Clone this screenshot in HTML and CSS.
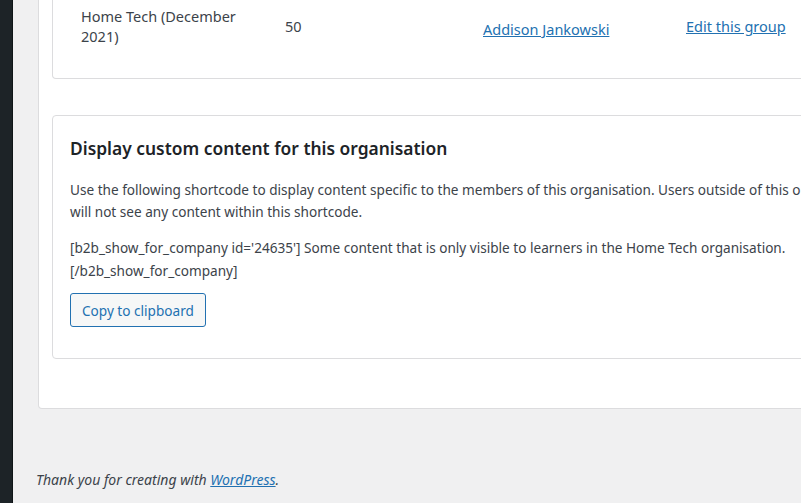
FILE: index.html
```html
<!DOCTYPE html>
<html lang="en">
  <head>
    <meta charset="UTF-8" />
    <meta name="viewport" content="width=device-width, initial-scale=1.0" />
    <title>Organisation</title>
    <link rel="stylesheet" href="styles.css">
  </head>

  <body>
    <aside class="sidebar"></aside>
    <div class="content">
      <main class="panel">
        <section class="card groups">
          <div class="group-row">
            <span class="group-name">Home Tech (December 2021)</span>
            <span class="group-count">50</span>
            <a class="group-leader" href="#">Addison Jankowski</a>
            <a class="group-edit" href="#">Edit this group</a>
          </div>
        </section>

        <section class="card shortcode">
          <h2>Display custom content for this organisation</h2>
          <p>Use the following shortcode to display content specific to the members of this organisation. Users outside of this organisation will not see any content within this shortcode.</p>
          <p class="code">[b2b_show_for_company id='24635'] Some content that is only visible to learners in the Home Tech organisation. [/b2b_show_for_company]</p>
          <button class="button">Copy to clipboard</button>
        </section>
      </main>

      <footer class="footer">
        <p><em>Thank you for creating with <a href="#">WordPress</a>.</em></p>
      </footer>
    </div>
  </body>
</html>
```

FILE: styles.css
```css
html {
  box-sizing: border-box;
  font-family: "Noto Sans", "Open Sans", sans-serif;
  font-size: 13.6px;
}

*,
*:before,
*:after {
  box-sizing: inherit;
}

body {
  margin: 0;
  height: 503px;
  overflow: hidden;
  display: flex;
  background-color: #f0f0f1;
  color: #3c434a;
}

a {
  color: #2271b1;
}

.sidebar {
  flex: 0 0 13px;
  background-color: #1d2327;
  border-right: 1px solid #101517;
}

.content {
  flex: 0 0 909px;
  display: flex;
  flex-direction: column;
}

.panel {
  margin-left: 25px;
  padding: 0 13px 49px;
  background-color: #fff;
  border: 1px solid #dcdcde;
  border-top: 0;
  border-radius: 0 0 4px 4px;
}

.card {
  border: 1px solid #dcdcde;
  border-radius: 4px;
}

.groups {
  border-top: 0;
  border-radius: 0 0 4px 4px;
  padding: 6px 0 32px 28px;
}

.group-row {
  display: grid;
  grid-template-columns: 204px 198px 203px 1fr;
  align-items: center;
  font-size: 14.5px;
  line-height: 20px;
}

.group-name {
  max-width: 175px;
}

.group-leader {
  margin-top: 5px;
}

.shortcode {
  margin-top: 36px;
  padding: 20px 17px 31px;
}

.shortcode h2 {
  margin: 0 0 19px;
  font-size: 17.4px;
  font-weight: 600;
  line-height: 24px;
  color: #1d2327;
}

.shortcode p {
  margin: 0 0 13px;
  line-height: 22px;
}

.shortcode .code {
  margin-bottom: 11px;
  line-height: 23px;
}

.button {
  font-family: inherit;
  font-size: 13.6px;
  height: 34px;
  padding: 0 11px;
  color: #2271b1;
  background-color: #f6f7f7;
  border: 1px solid #2271b1;
  border-radius: 3px;
}

.footer {
  margin-top: auto;
  padding: 0 0 13px 23px;
}

.footer p {
  margin: 0;
  font-size: 14px;
  line-height: 20px;
}
```
